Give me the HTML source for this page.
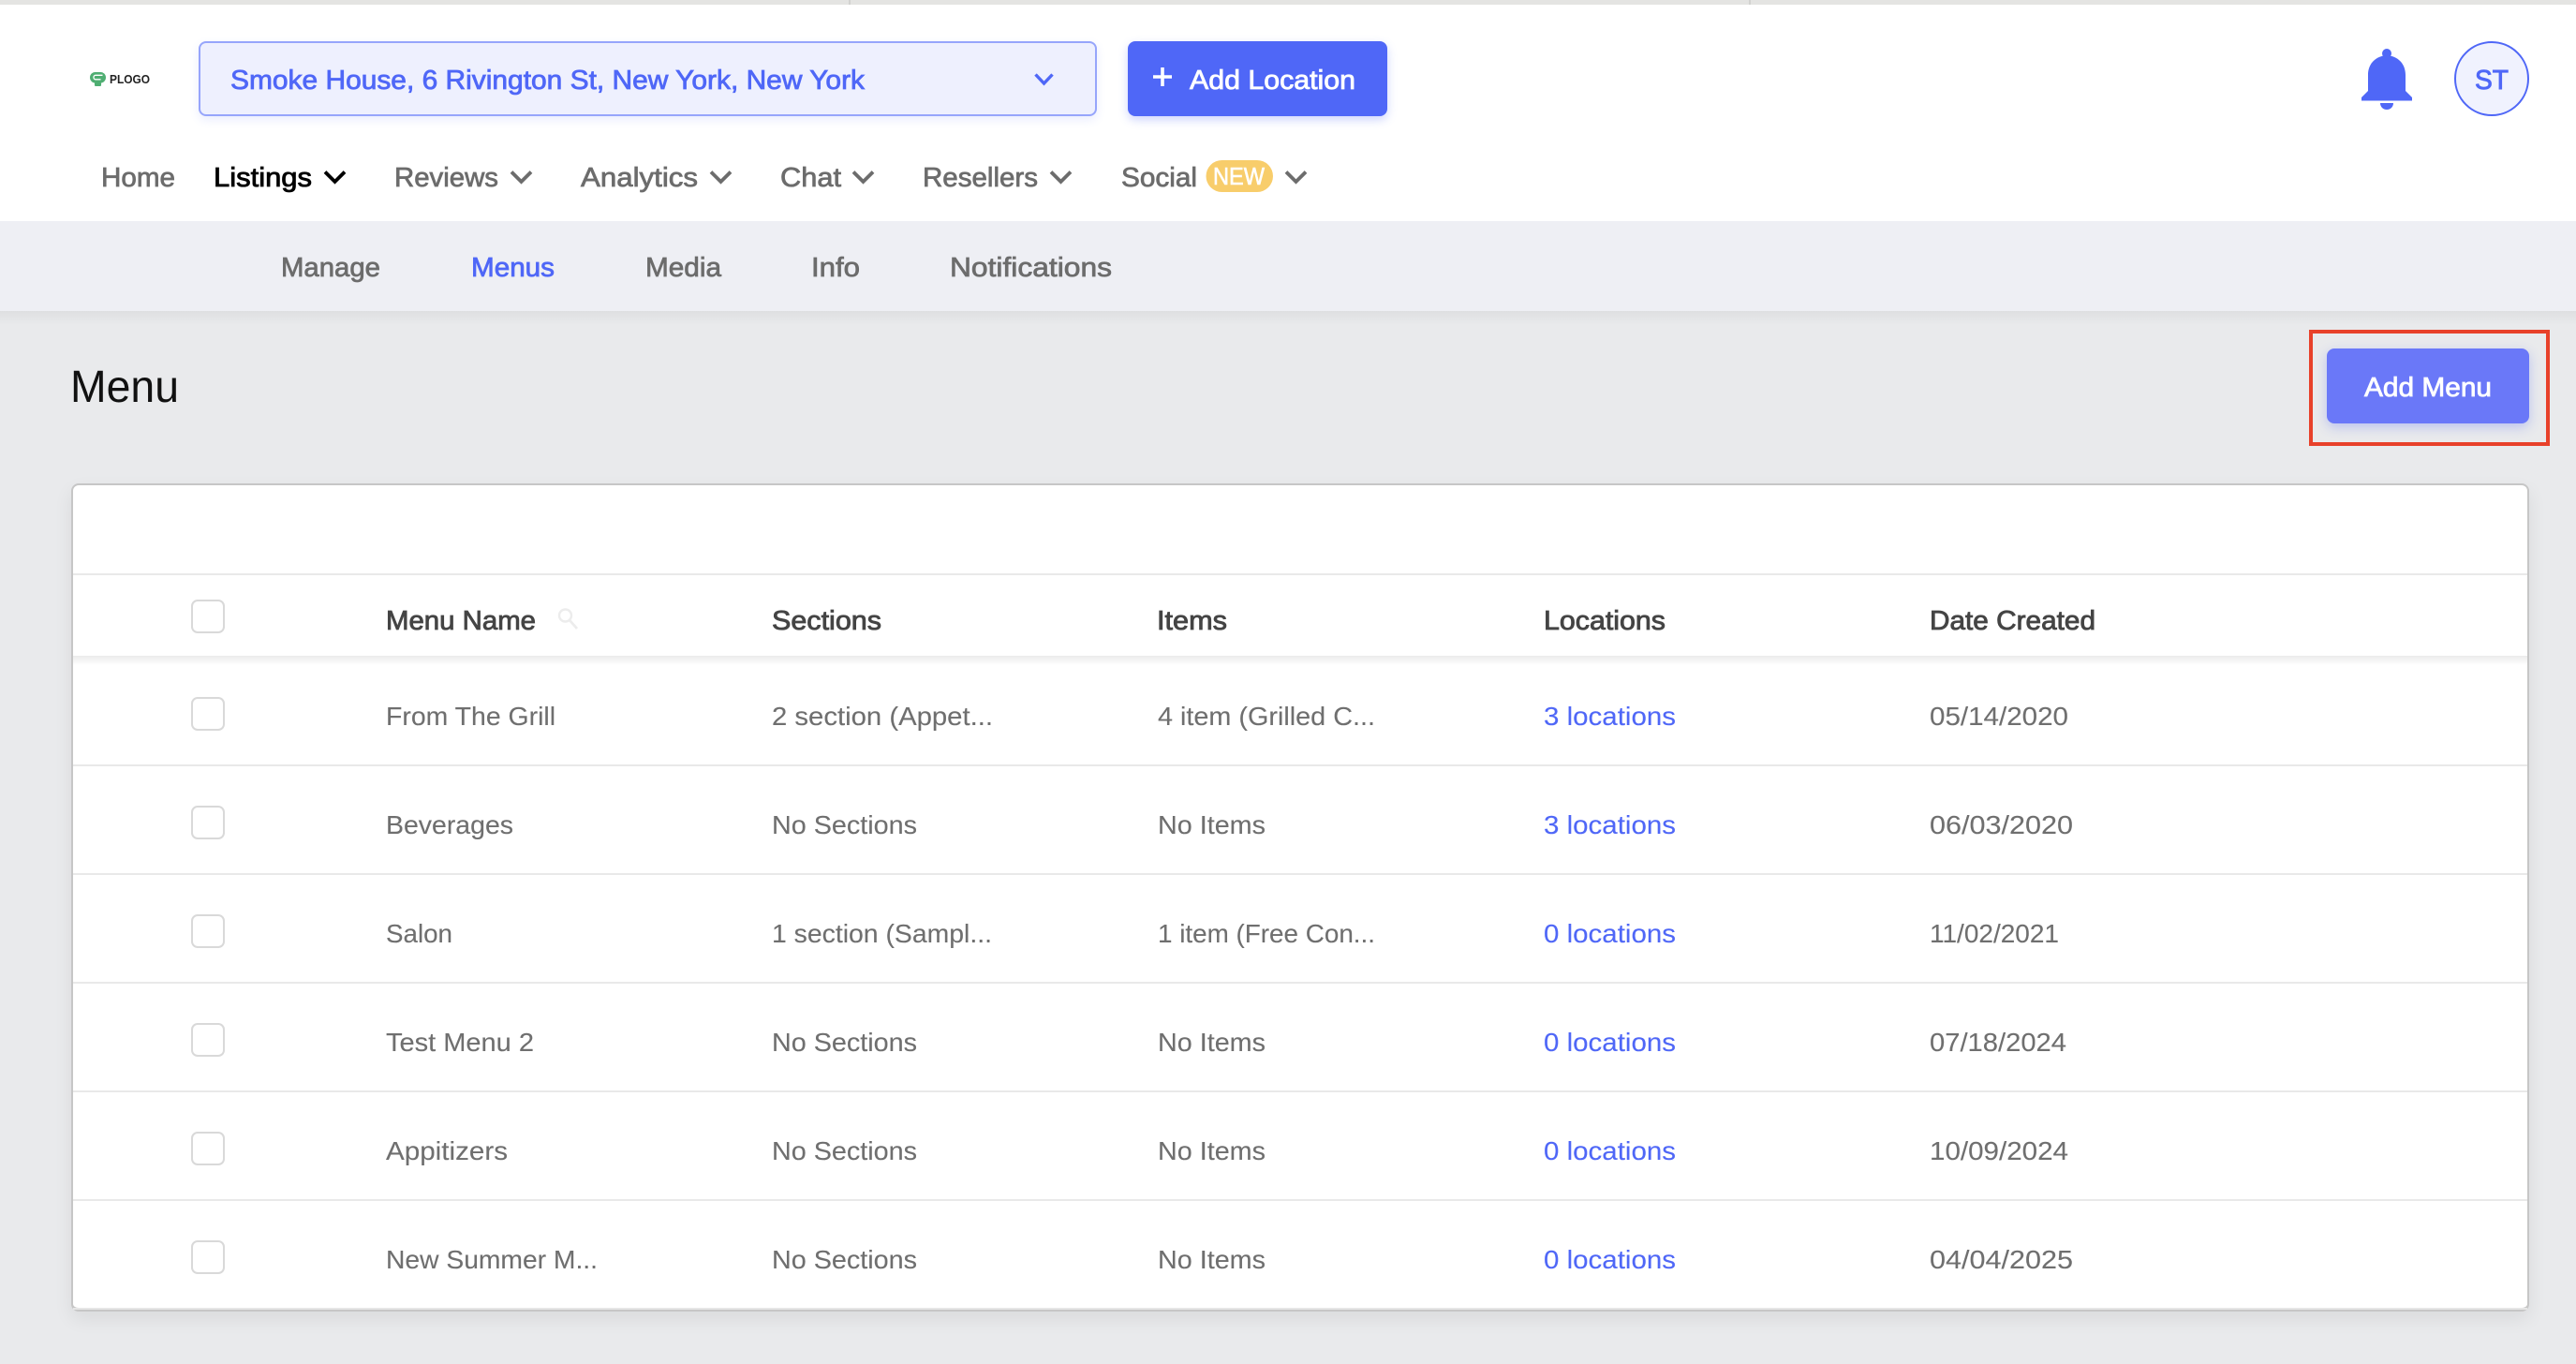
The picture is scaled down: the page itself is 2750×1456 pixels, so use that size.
<!DOCTYPE html>
<html><head><meta charset="utf-8"><style>
html,body{margin:0;padding:0;background:#e9eaec}
body{position:relative;width:2750px;height:1456px;overflow:hidden;font-family:"Liberation Sans",sans-serif}
.a{position:absolute;box-sizing:border-box}
svg{position:absolute;left:0;top:0}
text{font-family:"Liberation Sans",sans-serif;font-size:29px}
.n{fill:#6c6c6c;stroke:#6c6c6c;stroke-width:.75px}
.r{fill:#6f6f6f;font-size:28px;stroke:#6f6f6f;stroke-width:.12px}
.h{fill:#444;stroke:#444;stroke-width:.85px;font-size:28.5px}
.l{fill:#4f67f7;font-size:28px;stroke:#4f67f7;stroke-width:.12px}
.cb{position:absolute;left:204px;width:36px;height:36px;border:2px solid #d9d9d9;border-radius:7px;background:#fff;box-sizing:border-box}
.rl{position:absolute;left:78px;width:2620px;height:2px;background:#e9e9e9}
</style></head><body>
<div class="a" style="left:0;top:0;width:2750px;height:5px;background:#e4e4e2"></div>
<div class="a" style="left:0;top:236px;width:2750px;height:96px;background:#eeeff4"></div>
<div class="a" style="left:0;top:332px;width:2750px;height:15px;background:linear-gradient(#dedfe1,#e9eaec)"></div>
<div class="a" style="left:0;top:5px;width:2750px;height:231px;background:#fff"></div>

<div class="a" style="left:212px;top:44px;width:959px;height:80px;background:#eef0fe;border:2px solid #96a5fb;border-radius:8px;box-shadow:0 4px 10px rgba(79,103,247,.12)"></div>
<div class="a" style="left:1204px;top:44px;width:277px;height:80px;background:#4f67f7;border-radius:8px;box-shadow:0 4px 10px rgba(79,103,247,.28)"></div>
<div class="a" style="left:2620px;top:44px;width:80px;height:80px;background:#f0f2fe;border:2px solid #4f67f7;border-radius:50%"></div>
<div class="a" style="left:2484px;top:372px;width:216px;height:80px;background:#6a78f8;border-radius:8px;box-shadow:0 4px 12px rgba(79,103,247,.3)"></div>
<div class="a" style="left:2465px;top:352px;width:257px;height:124px;border:4.5px solid #e8412a"></div>

<div class="a" style="left:76px;top:516px;width:2624px;height:884px;background:#fff;border:2px solid #c6c6c6;border-bottom-width:4px;border-radius:8px;box-shadow:0 8px 20px rgba(0,0,0,.07)"></div>
<div class="rl" style="top:612px"></div>
<div class="a" style="left:78px;top:700px;width:2620px;height:10px;background:linear-gradient(#ebebeb,#fff)"></div>
<div class="rl" style="top:816px"></div>
<div class="rl" style="top:932px"></div>
<div class="rl" style="top:1048px"></div>
<div class="rl" style="top:1164px"></div>
<div class="rl" style="top:1280px"></div>
<div class="a" style="left:78px;top:1396px;width:2620px;height:2px;background:#e6e6e6"></div>

<div class="cb" style="top:640px"></div>
<div class="cb" style="top:744px"></div>
<div class="cb" style="top:860px"></div>
<div class="cb" style="top:976px"></div>
<div class="cb" style="top:1092px"></div>
<div class="cb" style="top:1208px"></div>
<div class="cb" style="top:1324px"></div>

<svg width="2750" height="1456" viewBox="0 0 2750 1456" xmlns="http://www.w3.org/2000/svg">
<rect x="906" y="0" width="2" height="5" fill="#d2d2d0"/><rect x="1867" y="0" width="2" height="5" fill="#d2d2d0"/>
<!-- logo -->
<rect x="96" y="77" width="17" height="11.500" rx="5.700" fill="#4fae72"/>
<rect x="101" y="88" width="7" height="4" rx="1" fill="#4fae72"/>
<path d="M109.500 80.300H102C99.300 80.300 99.300 84.800 102 84.800H107.500" fill="none" stroke="#fff" stroke-width="1.300"/>
<text x="117" y="89" textLength="43" lengthAdjust="spacingAndGlyphs" style="font-size:12.5px;font-weight:bold;fill:#222">PLOGO</text>

<text x="246" y="95" textLength="677" lengthAdjust="spacingAndGlyphs" style="fill:#4f67f7;stroke:#4f67f7;stroke-width:.8px">Smoke House, 6 Rivington St, New York, New York</text>
<polyline points="1105.500,79.500 1114.500,89 1123.500,79.500" fill="none" stroke="#4f67f7" stroke-width="3.400"/>
<path d="M1241 72V92M1231 82H1251" stroke="#fff" stroke-width="3.600" fill="none"/>
<text x="1270" y="95" textLength="177" lengthAdjust="spacingAndGlyphs" style="fill:#fff;stroke:#fff;stroke-width:.8px">Add Location</text>

<!-- bell -->
<circle cx="2548" cy="57" r="5" fill="#4f67f7"/>
<path d="M2521 107.500V104L2528 97V80C2528 68 2536 60 2548 59C2560 60 2568 68 2568 80V97L2575 104V107.500Z" fill="#4f67f7"/>
<path d="M2541 110H2555C2555 114 2552 117 2548 117C2544 117 2541 114 2541 110Z" fill="#4f67f7"/>
<text x="2642" y="95" textLength="36" lengthAdjust="spacingAndGlyphs" style="fill:#4f67f7;stroke:#4f67f7;stroke-width:.9px">ST</text>

<!-- nav -->
<text class="n" x="108" y="199" textLength="79" lengthAdjust="spacingAndGlyphs">Home</text>
<text x="228" y="199" textLength="105" lengthAdjust="spacingAndGlyphs" style="fill:#000;stroke:#000;stroke-width:.85px">Listings</text>
<polyline points="347,183.500 357.500,194 368,183.500" fill="none" stroke="#000" stroke-width="3.800"/>
<text class="n" x="421" y="199" textLength="111" lengthAdjust="spacingAndGlyphs">Reviews</text>
<polyline points="546,183.500 556.500,194 567,183.500" fill="none" stroke="#6c6c6c" stroke-width="3.800"/>
<text class="n" x="620" y="199" textLength="125" lengthAdjust="spacingAndGlyphs">Analytics</text>
<polyline points="759,183.500 769.500,194 780,183.500" fill="none" stroke="#6c6c6c" stroke-width="3.800"/>
<text class="n" x="833" y="199" textLength="65" lengthAdjust="spacingAndGlyphs">Chat</text>
<polyline points="911,183.500 921.500,194 932,183.500" fill="none" stroke="#6c6c6c" stroke-width="3.800"/>
<text class="n" x="985" y="199" textLength="123" lengthAdjust="spacingAndGlyphs">Resellers</text>
<polyline points="1122,183.500 1132.500,194 1143,183.500" fill="none" stroke="#6c6c6c" stroke-width="3.800"/>
<text class="n" x="1197" y="199" textLength="81" lengthAdjust="spacingAndGlyphs">Social</text>
<rect x="1287.500" y="171" width="71.500" height="34" rx="17" fill="#f8cd6b"/>
<text x="1295" y="197" textLength="55" lengthAdjust="spacingAndGlyphs" style="font-size:26px;fill:#fff;stroke:#fff;stroke-width:.6px">NEW</text>
<polyline points="1373,183.500 1383.500,194 1394,183.500" fill="none" stroke="#6c6c6c" stroke-width="3.800"/>

<!-- subnav -->
<text class="n" x="300" y="295" textLength="106" lengthAdjust="spacingAndGlyphs">Manage</text>
<text x="503" y="295" textLength="89" lengthAdjust="spacingAndGlyphs" style="fill:#4f67f7;stroke:#4f67f7;stroke-width:.8px">Menus</text>
<text class="n" x="689" y="295" textLength="81" lengthAdjust="spacingAndGlyphs">Media</text>
<text class="n" x="866" y="295" textLength="52" lengthAdjust="spacingAndGlyphs">Info</text>
<text class="n" x="1014" y="295" textLength="173" lengthAdjust="spacingAndGlyphs">Notifications</text>

<text x="75" y="429" textLength="116" lengthAdjust="spacingAndGlyphs" style="font-size:48px;fill:#111">Menu</text>
<text x="2524" y="423" textLength="136" lengthAdjust="spacingAndGlyphs" style="fill:#fff;stroke:#fff;stroke-width:.8px">Add Menu</text>

<!-- header -->
<text class="h" x="412" y="672" textLength="160" lengthAdjust="spacingAndGlyphs">Menu Name</text>
<circle cx="603.500" cy="657" r="6.500" fill="none" stroke="#ececec" stroke-width="2.400"/>
<path d="M608 662L616 671" stroke="#ececec" stroke-width="2.800" fill="none"/>
<text class="h" x="824" y="672" textLength="117" lengthAdjust="spacingAndGlyphs">Sections</text>
<text class="h" x="1235" y="672" textLength="75" lengthAdjust="spacingAndGlyphs">Items</text>
<text class="h" x="1648" y="672" textLength="130" lengthAdjust="spacingAndGlyphs">Locations</text>
<text class="h" x="2060" y="672" textLength="177" lengthAdjust="spacingAndGlyphs">Date Created</text>

<!-- rows -->
<text class="r" x="412" y="774" textLength="181" lengthAdjust="spacingAndGlyphs">From The Grill</text>
<text class="r" x="824" y="774" textLength="236" lengthAdjust="spacingAndGlyphs">2 section (Appet...</text>
<text class="r" x="1236" y="774" textLength="232" lengthAdjust="spacingAndGlyphs">4 item (Grilled C...</text>
<text class="l" x="1648" y="774" textLength="141" lengthAdjust="spacingAndGlyphs">3 locations</text>
<text class="r" x="2060" y="774" textLength="148" lengthAdjust="spacingAndGlyphs">05/14/2020</text>

<text class="r" x="412" y="890" textLength="136" lengthAdjust="spacingAndGlyphs">Beverages</text>
<text class="r" x="824" y="890" textLength="155" lengthAdjust="spacingAndGlyphs">No Sections</text>
<text class="r" x="1236" y="890" textLength="115" lengthAdjust="spacingAndGlyphs">No Items</text>
<text class="l" x="1648" y="890" textLength="141" lengthAdjust="spacingAndGlyphs">3 locations</text>
<text class="r" x="2060" y="890" textLength="153" lengthAdjust="spacingAndGlyphs">06/03/2020</text>

<text class="r" x="412" y="1006" textLength="71" lengthAdjust="spacingAndGlyphs">Salon</text>
<text class="r" x="824" y="1006" textLength="235" lengthAdjust="spacingAndGlyphs">1 section (Sampl...</text>
<text class="r" x="1236" y="1006" textLength="232" lengthAdjust="spacingAndGlyphs">1 item (Free Con...</text>
<text class="l" x="1648" y="1006" textLength="141" lengthAdjust="spacingAndGlyphs">0 locations</text>
<text class="r" x="2060" y="1006" textLength="138" lengthAdjust="spacingAndGlyphs">11/02/2021</text>

<text class="r" x="412" y="1122" textLength="158" lengthAdjust="spacingAndGlyphs">Test Menu 2</text>
<text class="r" x="824" y="1122" textLength="155" lengthAdjust="spacingAndGlyphs">No Sections</text>
<text class="r" x="1236" y="1122" textLength="115" lengthAdjust="spacingAndGlyphs">No Items</text>
<text class="l" x="1648" y="1122" textLength="141" lengthAdjust="spacingAndGlyphs">0 locations</text>
<text class="r" x="2060" y="1122" textLength="146" lengthAdjust="spacingAndGlyphs">07/18/2024</text>

<text class="r" x="412" y="1238" textLength="130" lengthAdjust="spacingAndGlyphs">Appitizers</text>
<text class="r" x="824" y="1238" textLength="155" lengthAdjust="spacingAndGlyphs">No Sections</text>
<text class="r" x="1236" y="1238" textLength="115" lengthAdjust="spacingAndGlyphs">No Items</text>
<text class="l" x="1648" y="1238" textLength="141" lengthAdjust="spacingAndGlyphs">0 locations</text>
<text class="r" x="2060" y="1238" textLength="148" lengthAdjust="spacingAndGlyphs">10/09/2024</text>

<text class="r" x="412" y="1354" textLength="226" lengthAdjust="spacingAndGlyphs">New Summer M...</text>
<text class="r" x="824" y="1354" textLength="155" lengthAdjust="spacingAndGlyphs">No Sections</text>
<text class="r" x="1236" y="1354" textLength="115" lengthAdjust="spacingAndGlyphs">No Items</text>
<text class="l" x="1648" y="1354" textLength="141" lengthAdjust="spacingAndGlyphs">0 locations</text>
<text class="r" x="2060" y="1354" textLength="153" lengthAdjust="spacingAndGlyphs">04/04/2025</text>
</svg>
</body></html>
